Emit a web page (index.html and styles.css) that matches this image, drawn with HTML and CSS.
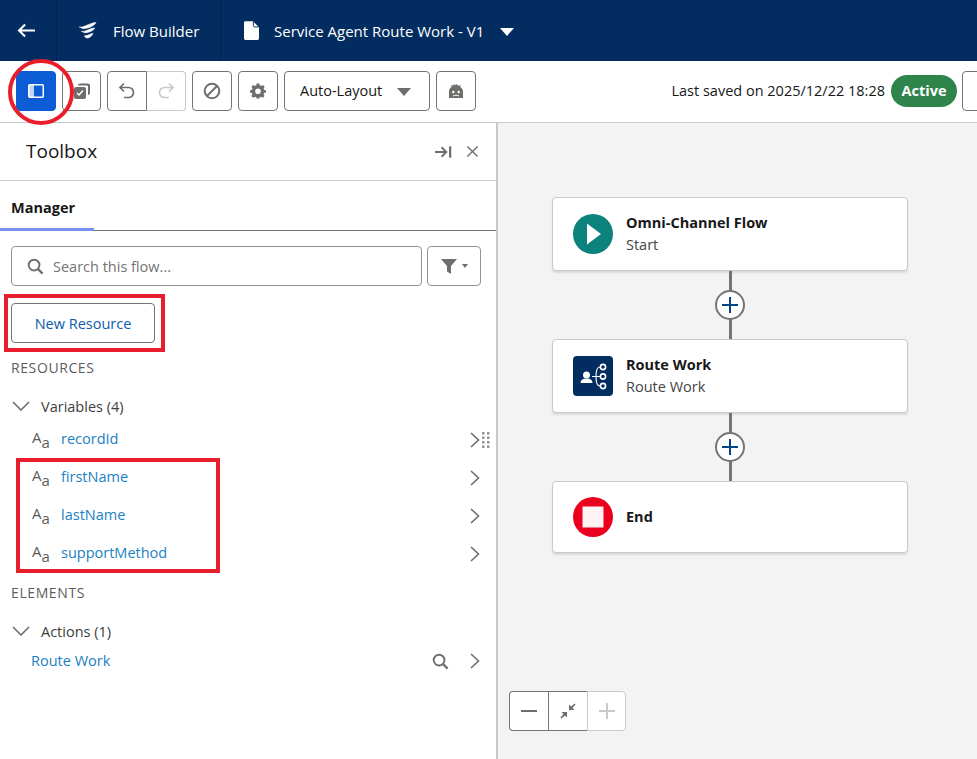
FILE: index.html
```html
<!DOCTYPE html>
<html lang="en">
<head>
  <meta charset="UTF-8">
  <meta name="viewport" content="width=device-width, initial-scale=1.0">
  <title>Flow Builder</title>
  <link rel="stylesheet" href="styles.css">
</head>
<body>
  <header class="topbar">
    <div class="topbar-back">
      <svg class="icon-back" viewBox="0 0 20 16"><path d="M19 8H2M8.500 1.500 2 8l6.500 6.500" fill="none" stroke="#fff" stroke-width="2.200"/></svg>
    </div>
    <div class="topbar-app">
      <svg class="icon-logo" viewBox="0 0 20 20"><path d="M1 6C6 7 11 2 18 1.500C16 5 10 8 4 7.500M3 10.500C8 11 12 7 17 7C15 10 10 12 6 11.700M6 15C10 15 12 12.500 15 12.500C14 15 11 17.500 8 17" fill="#fff" stroke="#fff" stroke-width=".6"/></svg>
      <span>Flow Builder</span>
    </div>
    <div class="topbar-title">
      <svg class="icon-doc" viewBox="0 0 16 20"><path d="M1.500 0H9.500L16 6.500V18.500A1.500 1.500 0 0 1 14.500 20H1.500A1.500 1.500 0 0 1 0 18.500V1.500A1.500 1.500 0 0 1 1.500 0Z" fill="#fff"/><path d="M10 0.500V5A1.200 1.200 0 0 0 11.200 6.200H15.800" fill="none" stroke="#032d60" stroke-width="1"/></svg>
      <span>Service Agent Route Work - V1</span>
      <span class="caret caret-white"></span>
    </div>
  </header>

  <div class="toolbar">
    <button class="tool tool-active">
      <svg class="icon-16" viewBox="0 0 16 14"><rect x=".75" y=".75" width="14.500" height="12.500" rx="1" fill="none" stroke="#fff" stroke-width="1.500"/><rect x="1" y="1" width="5" height="12" fill="#fff" opacity=".75"/></svg>
    </button>
    <button class="tool tool-copy">
      <svg class="icon-18" viewBox="0 0 18 18"><path d="M5 3.500A2 2 0 0 1 7 1.500H15A2 2 0 0 1 17 3.500V11A2 2 0 0 1 15 13V4.500A1 1 0 0 0 14 3.500Z" fill="#706e6b"/><rect x="1" y="5" width="12" height="12" rx="2" fill="#706e6b"/><path d="M4 11l2 2 4-4.500" fill="none" stroke="#fff" stroke-width="1.500"/></svg>
    </button>
    <div class="tool-group">
      <button class="tool">
        <svg class="icon-18" viewBox="0 0 18 18"><path d="M6 1.500 2 5.500l4 4M2.500 5.500H10.500A5 5 0 0 1 10.500 15.500H6" fill="none" stroke="#706e6b" stroke-width="1.700"/></svg>
      </button>
      <button class="tool tool-disabled">
        <svg class="icon-18" viewBox="0 0 18 18"><path d="M12 1.500l4 4-4 4M15.500 5.500H7.500A5 5 0 0 0 7.500 15.500H12" fill="none" stroke="#c9c9c9" stroke-width="1.700"/></svg>
      </button>
    </div>
    <button class="tool">
      <svg class="icon-18" viewBox="0 0 18 18"><circle cx="9" cy="9" r="7.300" fill="none" stroke="#706e6b" stroke-width="2"/><path d="M4 14 14 4" stroke="#706e6b" stroke-width="2"/></svg>
    </button>
    <button class="tool">
      <svg class="icon-18" viewBox="0 0 18 18"><path d="M7.500 1h3l.5 2.200 1.500.7 2-1.200 2 2.200-1.200 1.900.6 1.500L18 8.800v2.400l-2.200.5-.6 1.500 1.200 2-2 2-2-1.200-1.500.6-.4 1.400h-3l-.5-1.400-1.500-.6-2 1.200-2-2 1.200-2-.6-1.500L0 11.200V8.800l2.200-.5.600-1.500-1.200-1.900 2-2.200 2 1.200 1.500-.7Z" transform="translate(1 .5) scale(.89)" fill="#706e6b"/><circle cx="9" cy="9.300" r="2.800" fill="#fff"/></svg>
    </button>
    <button class="tool tool-select">
      <span>Auto-Layout</span>
      <span class="caret caret-grey"></span>
    </button>
    <button class="tool">
      <svg class="icon-18" viewBox="0 0 18 18"><path d="M2 16V9.500C2 7.500 3 6 4.500 5L4 3l2 .8L7 2l1.500 1.300L10 2l1 1.800L13.500 3 13.200 5C15 6 16 7.500 16 9.500V16Z" fill="#706e6b"/><circle cx="6.300" cy="10" r="1.200" fill="#fff"/><circle cx="11.700" cy="10" r="1.200" fill="#fff"/><path d="M6 14c1-1 5-1 6 0" fill="none" stroke="#fff" stroke-width="1"/></svg>
    </button>
    <div class="toolbar-right">
      <span class="saved">Last saved on 2025/12/22 18:28</span>
      <span class="badge">Active</span>
      <button class="tool tool-cut"></button>
    </div>
  </div>

  <main class="workspace">
    <aside class="panel">
      <div class="panel-head">
        <h2>Toolbox</h2>
        <svg class="icon-pin" viewBox="0 0 18 14"><path d="M0 7H11M7 2l5 5-5 5" fill="none" stroke="#706e6b" stroke-width="2"/><path d="M16 1V13" stroke="#706e6b" stroke-width="2.400"/></svg>
        <svg class="icon-close" viewBox="0 0 14 14"><path d="M1.500 1.500 12.500 12.500M12.500 1.500 1.500 12.500" stroke="#706e6b" stroke-width="1.500"/></svg>
      </div>
      <div class="tabs"><div class="tab">Manager</div></div>
      <div class="search-row">
        <div class="search">
          <svg class="icon-search" viewBox="0 0 18 18"><circle cx="7.500" cy="7.500" r="5.700" fill="none" stroke="#706e6b" stroke-width="2"/><path d="M11.500 11.500 16.500 16.500" stroke="#706e6b" stroke-width="2.400"/></svg>
          <span>Search this flow...</span>
        </div>
        <button class="filter">
          <svg class="icon-filter" viewBox="0 0 16 15"><path d="M0 0H16L10 7V15L6 12.500V7Z" fill="#706e6b"/></svg>
          <span class="caret caret-small"></span>
        </button>
      </div>
      <button class="new-resource">New Resource</button>
      <div class="section-label label-resources">RESOURCES</div>
      <div class="group-head">
        <svg class="chev-down" viewBox="0 0 18 10"><path d="M1 1l8 8 8-8" fill="none" stroke="#706e6b" stroke-width="1.600"/></svg>
        <span>Variables (4)</span>
      </div>
      <ul class="vars">
        <li class="var">
          <span class="aa">A<small>a</small></span><a>recordId</a>
          <svg class="chev-right" viewBox="0 0 10 16"><path d="M1 1l7.500 7L1 15" fill="none" stroke="#706e6b" stroke-width="1.600"/></svg>
          <svg class="grip" viewBox="0 0 8 17"><g fill="#939393"><rect x="0" y="0" width="2.500" height="2.500"/><rect x="5" y="0" width="2.500" height="2.500"/><rect x="0" y="4.500" width="2.500" height="2.500"/><rect x="5" y="4.500" width="2.500" height="2.500"/><rect x="0" y="9" width="2.500" height="2.500"/><rect x="5" y="9" width="2.500" height="2.500"/><rect x="0" y="13.500" width="2.500" height="2.500"/><rect x="5" y="13.500" width="2.500" height="2.500"/></g></svg>
        </li>
        <li class="var">
          <span class="aa">A<small>a</small></span><a>firstName</a>
          <svg class="chev-right" viewBox="0 0 10 16"><path d="M1 1l7.500 7L1 15" fill="none" stroke="#706e6b" stroke-width="1.600"/></svg>
        </li>
        <li class="var">
          <span class="aa">A<small>a</small></span><a>lastName</a>
          <svg class="chev-right" viewBox="0 0 10 16"><path d="M1 1l7.500 7L1 15" fill="none" stroke="#706e6b" stroke-width="1.600"/></svg>
        </li>
        <li class="var">
          <span class="aa">A<small>a</small></span><a>supportMethod</a>
          <svg class="chev-right" viewBox="0 0 10 16"><path d="M1 1l7.500 7L1 15" fill="none" stroke="#706e6b" stroke-width="1.600"/></svg>
        </li>
      </ul>
      <div class="section-label label-elements">ELEMENTS</div>
      <div class="group-head">
        <svg class="chev-down" viewBox="0 0 18 10"><path d="M1 1l8 8 8-8" fill="none" stroke="#706e6b" stroke-width="1.600"/></svg>
        <span>Actions (1)</span>
      </div>
      <div class="action">
        <a>Route Work</a>
        <svg class="icon-search action-search" viewBox="0 0 18 18"><circle cx="7.500" cy="7.500" r="5.700" fill="none" stroke="#706e6b" stroke-width="2"/><path d="M11.500 11.500 16.500 16.500" stroke="#706e6b" stroke-width="2.400"/></svg>
        <svg class="chev-right" viewBox="0 0 10 16"><path d="M1 1l7.500 7L1 15" fill="none" stroke="#706e6b" stroke-width="1.600"/></svg>
      </div>
    </aside>

    <section class="canvas">
      <div class="node">
        <svg class="node-icon" viewBox="0 0 40 40"><circle cx="20" cy="20" r="20" fill="#0b827c"/><path d="M14 9.500 28 20 14 30.500Z" fill="#fff"/></svg>
        <div>
          <div class="node-title">Omni-Channel Flow</div>
          <div class="node-sub">Start</div>
        </div>
      </div>
      <div class="connector"><span class="add"><svg viewBox="0 0 18 18"><path d="M9 1V17M1 9H17" stroke="#014486" stroke-width="2"/></svg></span></div>
      <div class="node">
        <svg class="node-icon" viewBox="0 0 40 40"><rect width="40" height="40" rx="4" fill="#032d60"/><circle cx="13.500" cy="19" r="3.500" fill="#fff"/><path d="M7.500 27c0-3 2-4.500 6-4.500s6 1.500 6 4.500Z" fill="#fff"/><path d="M19 20.500h4M23 20.500c0-5 .5-9.500 4-9.500M23 20.500c0 5 .5 9.500 4 9.500M23 20.500h4" fill="none" stroke="#fff" stroke-width="1.200"/><g fill="none" stroke="#fff" stroke-width="1.600"><circle cx="30" cy="11" r="2.600"/><circle cx="30" cy="20.500" r="2.600"/><circle cx="30" cy="30" r="2.600"/></g></svg>
        <div>
          <div class="node-title">Route Work</div>
          <div class="node-sub">Route Work</div>
        </div>
      </div>
      <div class="connector"><span class="add"><svg viewBox="0 0 18 18"><path d="M9 1V17M1 9H17" stroke="#014486" stroke-width="2"/></svg></span></div>
      <div class="node node-end">
        <svg class="node-icon" viewBox="0 0 40 40"><circle cx="20" cy="20" r="20" fill="#ea001e"/><rect x="9.500" y="9.500" width="21" height="21" fill="#fff" opacity=".95"/></svg>
        <div class="node-title">End</div>
      </div>

      <div class="zoom">
        <button class="zoom-btn">
          <svg viewBox="0 0 16 16"><path d="M0 8H16" stroke="#706e6b" stroke-width="2"/></svg>
        </button>
        <button class="zoom-btn">
          <svg viewBox="0 0 16 16"><path d="M9 7V1.500L11 3.500 14.500 0.500 15.500 1.500 12.500 5 14.500 7ZM7 9V14.500L5 12.500 1.500 15.500 0.500 14.500 3.500 11 1.500 9Z" fill="#706e6b"/></svg>
        </button>
        <button class="zoom-btn zoom-off">
          <svg viewBox="0 0 16 16"><path d="M0 8H16M8 0V16" stroke="#c9c9c9" stroke-width="2"/></svg>
        </button>
      </div>
    </section>
  </main>

  <!-- red annotations drawn over the screenshot -->
  <div class="mark mark-circle"></div>
  <div class="mark mark-new"></div>
  <div class="mark mark-vars"></div>
</body>
</html>
```

FILE: styles.css
```css
* {
  box-sizing: border-box;
}

html, body {
  height: 100%;
}

body {
  margin: 0;
  overflow: hidden;
  position: relative;
  display: flex;
  flex-direction: column;
  font-family: "Open Sans", "Noto Sans", sans-serif;
  font-size: 14.5px;
  color: #181818;
  background: #fff;
}

button {
  font-family: inherit;
  background: #fff;
  cursor: pointer;
  padding: 0;
}

svg {
  display: block;
  flex: none;
}

/* top bar */
.topbar {
  height: 61px;
  flex: none;
  display: flex;
  background: #032d60;
  color: #fff;
  font-size: 15px;
}

.topbar-back {
  width: 57px;
  display: flex;
  align-items: center;
  padding-left: 17px;
  border-right: 1px solid #01204a;
}

.icon-back {
  width: 19px;
  height: 15px;
}

.topbar-app {
  width: 164px;
  display: flex;
  align-items: center;
  gap: 15px;
  padding-left: 21px;
  border-right: 1px solid #01204a;
}

.icon-logo {
  width: 20px;
  height: 20px;
}

.topbar-title {
  display: flex;
  align-items: center;
  padding-left: 23px;
}

.icon-doc {
  width: 15px;
  height: 19px;
  margin-right: 15px;
}

.caret {
  width: 0;
  height: 0;
  display: block;
  border-left: 7px solid transparent;
  border-right: 7px solid transparent;
  border-top: 8px solid #fff;
}

.caret-white {
  margin-left: 16px;
  margin-top: 3px;
}

/* toolbar */
.toolbar {
  height: 62px;
  flex: none;
  display: flex;
  align-items: center;
  gap: 6px;
  padding: 0 0 2px 16px;
  background: #fff;
  border-bottom: 1px solid #c9c9c9;
}

.tool {
  width: 40px;
  height: 40px;
  display: flex;
  align-items: center;
  justify-content: center;
  border: 1px solid #747474;
  border-radius: 4px;
}

.tool-active {
  background: #0b5cd5;
  border-color: #0b5cd5;
}

.tool-copy {
  width: 39px;
}

.tool-group {
  display: flex;
}

.tool-group .tool {
  border-radius: 4px 0 0 4px;
}

.tool-group .tool-disabled {
  border-radius: 0 4px 4px 0;
  border-color: #c9c9c9;
  border-left: none;
  width: 39px;
}

.tool-select {
  width: 146px;
  justify-content: flex-start;
  padding-left: 15px;
  font-size: 14.5px;
  color: #181818;
}

.caret-grey {
  border-top-color: #706e6b;
  margin-left: 15px;
  margin-top: 2px;
}

.icon-16 {
  width: 16px;
  height: 14px;
}

.icon-18 {
  width: 18px;
  height: 18px;
}

.toolbar-right {
  margin-left: auto;
  display: flex;
  align-items: center;
  margin-right: -30px;
}

.saved {
  font-size: 14.500px;
  margin-right: 6px;
}

.badge {
  width: 66px;
  height: 32px;
  line-height: 31px;
  text-align: center;
  border-radius: 16px;
  background: #2e844a;
  color: #fff;
  font-weight: 700;
  font-size: 14.500px;
  margin-right: 5px;
}

.tool-cut {
  width: 45px;
}

/* main area */
.workspace {
  flex: 1;
  display: flex;
  min-height: 0;
}

.panel {
  width: 498px;
  flex: none;
  background: #fff;
  border-right: 2px solid #c9c9c9;
}

.panel-head {
  height: 58px;
  display: flex;
  align-items: center;
  padding: 0 17px 0 26px;
  border-bottom: 1px solid #c9c9c9;
}

.panel-head h2 {
  margin: 0 auto 2px 0;
  font-weight: 400;
  font-size: 19px;
}

.icon-pin {
  width: 17px;
  height: 14px;
  margin-right: 14px;
}

.icon-close {
  width: 13px;
  height: 13px;
}

.tabs {
  height: 50px;
  border-bottom: 1px solid #747474;
}

.tab {
  width: 94px;
  height: 50px;
  padding: 17px 0 0 11px;
  line-height: 20px;
  font-weight: 700;
  border-bottom: 3px solid #7590ee;
}

.search-row {
  display: flex;
  gap: 5px;
  padding: 15px 15px 0 11px;
}

.search {
  flex: 1;
  height: 40px;
  display: flex;
  align-items: center;
  gap: 9px;
  padding-left: 15px;
  border: 1px solid #939393;
  border-radius: 4px;
  color: #747474;
}

.icon-search {
  width: 17px;
  height: 17px;
}

.filter {
  width: 54px;
  height: 40px;
  display: flex;
  align-items: center;
  justify-content: center;
  gap: 5px;
  border: 1px solid #939393;
  border-radius: 4px;
}

.icon-filter {
  width: 16px;
  height: 15px;
}

.caret-small {
  border-left-width: 3.500px;
  border-right-width: 3.500px;
  border-top: 4px solid #706e6b;
}

.new-resource {
  display: block;
  width: 144px;
  height: 40px;
  margin: 17px 0 0 11px;
  font-size: 14.500px;
  color: #0b5cab;
  border: 1px solid #747474;
  border-radius: 4px;
}

.section-label {
  padding-left: 11px;
  line-height: 20px;
  font-size: 14px;
  letter-spacing: .6px;
  color: #5c5c5c;
}

.label-resources {
  margin-top: 15px;
}

.label-elements {
  margin-top: 12px;
}

.group-head {
  display: flex;
  align-items: center;
  height: 20px;
  margin-top: 18px;
  padding-left: 12px;
  gap: 11px;
  color: #3e3e3c;
}

.chev-down {
  width: 18px;
  height: 10px;
}

.vars {
  list-style: none;
  margin: 3px 0 0;
  padding: 0;
}

.var {
  position: relative;
  height: 38px;
  display: flex;
  align-items: center;
  padding: 0 16px 0 32px;
}

.var a, .action a {
  color: #1b7fc4;
}

.aa {
  width: 29px;
  font-size: 15px;
  color: #5c5c5c;
  margin-bottom: 3px;
}

.aa small {
  font-size: 15px;
  position: relative;
  top: 5px;
}

.chev-right {
  width: 10px;
  height: 16px;
  margin-left: auto;
  margin-top: 3px;
}

.grip {
  position: absolute;
  right: 6px;
  top: 13px;
  width: 8px;
  height: 17px;
}

.action {
  display: flex;
  align-items: center;
  height: 26px;
  margin-top: 6px;
  padding: 0 16px 0 31px;
}

.action .chev-right {
  margin-left: 21px;
  margin-top: 2px;
}

.action-search {
  margin-left: auto;
  margin-top: 3px;
}

/* canvas */
.canvas {
  flex: 1;
  position: relative;
  background: #f3f3f3;
  padding: 74px 0 0 54px;
}

.node {
  width: 356px;
  height: 74px;
  display: flex;
  align-items: center;
  gap: 13px;
  padding-left: 20px;
  background: #fff;
  border: 1px solid #c9c9c9;
  border-radius: 4px;
  box-shadow: 0 2px 2px rgba(0, 0, 0, .1);
}

.node-end {
  height: 72px;
}

.node-icon {
  width: 40px;
  height: 40px;
}

.node-title {
  font-weight: 700;
  line-height: 22px;
}

.node-sub {
  line-height: 22px;
  color: #444;
}

.connector {
  width: 356px;
  height: 68px;
  display: flex;
  align-items: center;
  justify-content: center;
  background: linear-gradient(#747474, #747474) center / 3px 100% no-repeat;
}

.add {
  width: 30px;
  height: 30px;
  display: flex;
  align-items: center;
  justify-content: center;
  background: #fff;
  border: 2px solid #747474;
  border-radius: 50%;
}

.add svg {
  width: 18px;
  height: 18px;
}

.zoom {
  position: absolute;
  left: 11px;
  top: 568px;
  display: flex;
}

.zoom-btn {
  width: 39px;
  height: 40px;
  display: flex;
  align-items: center;
  justify-content: center;
  border: 1px solid #747474;
  border-right: none;
}

.zoom-btn svg {
  width: 16px;
  height: 16px;
}

.zoom-btn:first-child {
  border-radius: 4px 0 0 4px;
}

.zoom-off {
  border: 1px solid #c9c9c9;
  border-radius: 0 4px 4px 0;
}

/* red annotations */
.mark {
  position: absolute;
  border: 4px solid #e81e2c;
  pointer-events: none;
}

.mark-circle {
  left: 8px;
  top: 59px;
  width: 66px;
  height: 66px;
  border-radius: 50%;
}

.mark-new {
  left: 4px;
  top: 294px;
  width: 161px;
  height: 58px;
}

.mark-vars {
  left: 16px;
  top: 458px;
  width: 204px;
  height: 115px;
}
```
